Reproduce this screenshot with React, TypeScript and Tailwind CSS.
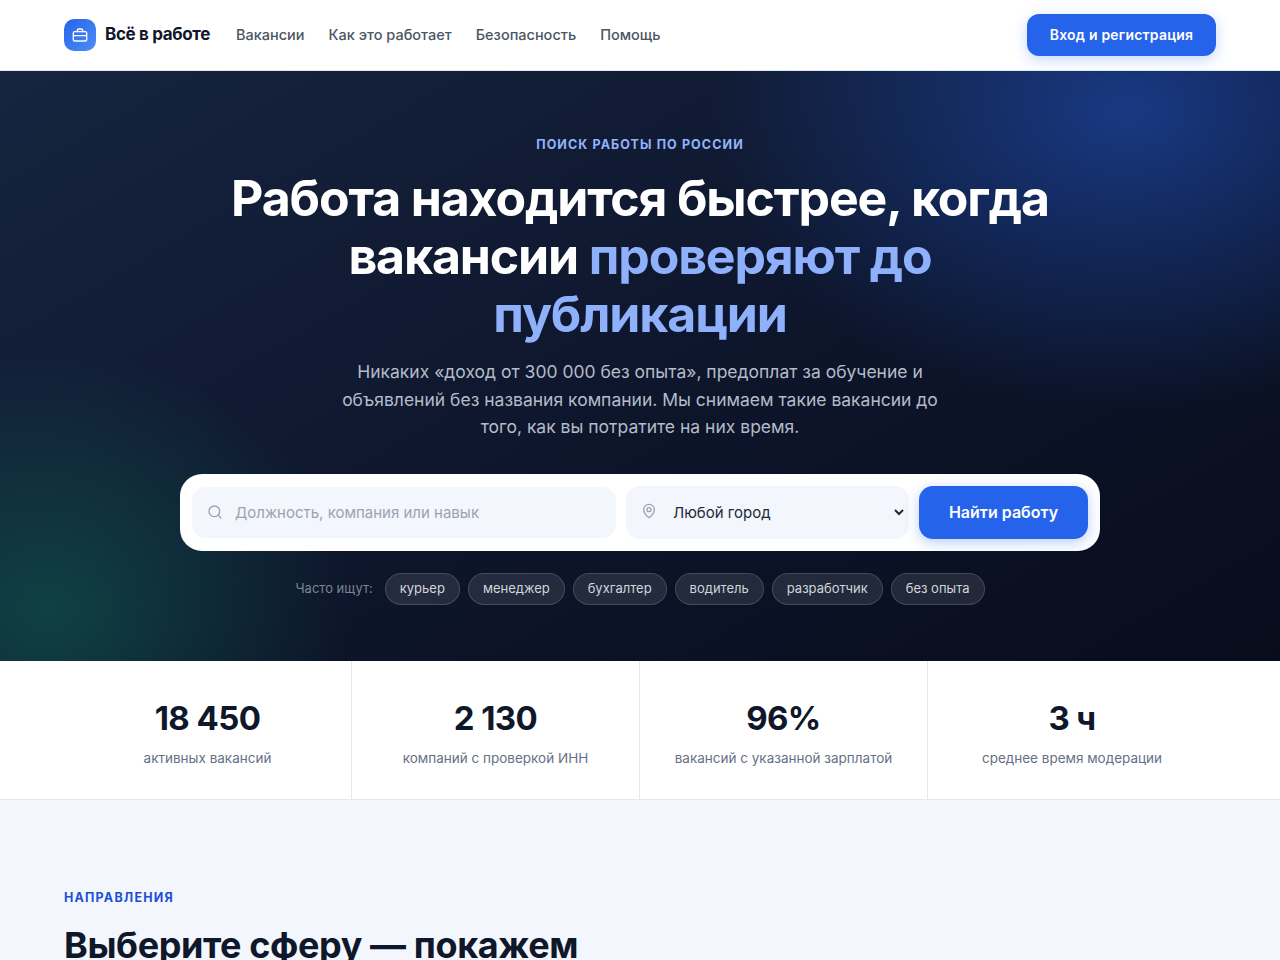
import { MapPin, Search } from "lucide-react";

const heading = "font-['Inter',sans-serif]";

const navLinks = ["Вакансии", "Как это работает", "Безопасность", "Помощь"];
const chips = ["курьер", "менеджер", "бухгалтер", "водитель", "разработчик", "без опыта"];
const stats = [
  { value: "18 450", label: "активных вакансий" },
  { value: "2 130", label: "компаний с проверкой ИНН" },
  { value: "96%", label: "вакансий с указанной зарплатой" },
  { value: "3 ч", label: "среднее время модерации" },
];

function LogoIcon() {
  return (
    <svg viewBox="0 0 24 24" fill="none" stroke="currentColor" strokeWidth={2} strokeLinecap="round" strokeLinejoin="round" className="w-4 h-4">
      <rect x="2" y="7" width="20" height="14" rx="2" />
      <path d="M16 7V5a2 2 0 0 0-2-2h-4a2 2 0 0 0-2 2v2" />
      <path d="M2 13h20" />
    </svg>
  );
}

export default function App() {
  return (
    <div className="min-h-screen bg-[#f3f6fc] font-['Inter',sans-serif] text-[#0f172a]">
      {/* Header */}
      <header className="bg-white border-b border-[#e2e8f0]">
        <div className="h-[70px] px-16 flex items-center justify-between">
          <div className="flex items-center">
            <div className="w-8 h-8 rounded-[10px] bg-gradient-to-br from-[#2563eb] to-[#4f8cf7] flex items-center justify-center text-white">
              <LogoIcon />
            </div>
            <span className={`${heading} ml-[9px] text-[17px] font-bold tracking-[-0.35px] text-[#0f172a]`}>Всё в работе</span>
            <nav className="ml-[26px] flex gap-6">
              {navLinks.map((link) => (
                <a key={link} className="text-[14.5px] font-medium text-[#4b5563]">
                  {link}
                </a>
              ))}
            </nav>
          </div>
          <button className={`${heading} w-[189px] h-[42px] rounded-xl bg-[#2563eb] text-white text-sm font-semibold tracking-[0.2px] shadow-[0_4px_14px_rgba(37,99,235,0.25)]`}>
            Вход и регистрация
          </button>
        </div>
      </header>

      {/* Hero */}
      <section className="h-[590px] pt-[66px] flex flex-col items-center bg-[radial-gradient(ellipse_420px_300px_at_1130px_40px,rgba(37,99,235,0.45),transparent_100%),radial-gradient(ellipse_300px_260px_at_50px_540px,rgba(16,185,129,0.25),transparent_100%),linear-gradient(150deg,#16243f_0%,#0d152b_55%,#080d1c_100%)]">
        <p className={`${heading} text-[12.5px] leading-4 font-bold tracking-[1.1px] text-[#93b4fd]`}>ПОИСК РАБОТЫ ПО РОССИИ</p>
        <h1 className={`${heading} mt-[16px] w-[860px] text-center text-[50px] leading-[58px] font-bold tracking-[-1.15px] text-white`}>
          Работа находится быстрее, когда вакансии <span className="text-[#8fb0fb]">проверяют до публикации</span>
        </h1>
        <p className="mt-[15px] w-[620px] text-center text-[17.5px] leading-[27.5px] text-[#b4bcc9]">
          Никаких «доход от 300 000 без опыта», предоплат за обучение и объявлений без названия компании. Мы снимаем такие вакансии до того, как вы потратите на них время.
        </p>

        {/* Search */}
        <form className="mt-[33px] w-[920px] h-[77px] p-3 rounded-[22px] bg-white flex items-center gap-[10px]">
          <label className="w-[424px] h-[51px] rounded-[14px] bg-[#f3f6fc] pl-[15px] flex items-center gap-[13px]">
            <Search className="w-4 h-4 text-[#9ca3af]" />
            <input
              className="flex-1 pt-[2px] -ml-[1px] bg-transparent outline-none text-[15px] placeholder:text-[#9ca3af]"
              placeholder="Должность, компания или навык"
            />
          </label>
          <label className="w-[283px] h-[53px] rounded-[14px] bg-[#f3f6fc] pl-[15px] pr-[2px] flex items-center gap-3">
            <MapPin className="w-4 h-4 text-[#9ca3af] -mt-[3px]" />
            <select className="flex-1 bg-transparent outline-none text-[15px] text-[#1f2937]">
              <option>Любой город</option>
            </select>
          </label>
          <button type="button" className={`${heading} w-[169px] h-[53px] rounded-[14px] bg-[#2563eb] text-white text-base font-semibold shadow-[0_4px_14px_rgba(37,99,235,0.3)]`}>
            Найти работу
          </button>
        </form>

        {/* Chips */}
        <div className="mt-[22px] flex items-center gap-2">
          <span className="mr-1 pt-[1px] text-[13px] text-[#7b8494]">Часто ищут:</span>
          {chips.map((chip) => (
            <span key={chip} className="h-8 pt-[1px] px-[14px] rounded-full border border-white/15 bg-white/10 flex items-center text-[13px] text-[#d1d5db]">
              {chip}
            </span>
          ))}
        </div>
      </section>

      {/* Stats */}
      <section className="bg-white border-b border-[#e2e8f0]">
        <div className="px-16 grid grid-cols-4">
          {stats.map((stat, i) => (
            <div key={stat.value} className={`h-[138px] pt-[34px] text-center ${i < 3 ? "border-r border-[#e2e8f0]" : ""}`}>
              <div className={`${heading} text-[33px] leading-[46px] font-bold tracking-[-0.6px] text-[#0f172a]`}>{stat.value}</div>
              <div className="mt-[7px] text-[13.5px] leading-5 text-[#667085]">{stat.label}</div>
            </div>
          ))}
        </div>
      </section>

      {/* Directions */}
      <section className="px-16 pt-[90px] pb-16">
        <p className={`${heading} text-[12.5px] leading-4 font-bold tracking-[1.2px] text-[#1d4ed8]`}>НАПРАВЛЕНИЯ</p>
        <h2 className={`${heading} mt-[17px] text-[36px] leading-[44px] font-bold tracking-[-0.4px] text-[#0f172a]`}>Выберите сферу — покажем</h2>
      </section>
    </div>
  );
}
